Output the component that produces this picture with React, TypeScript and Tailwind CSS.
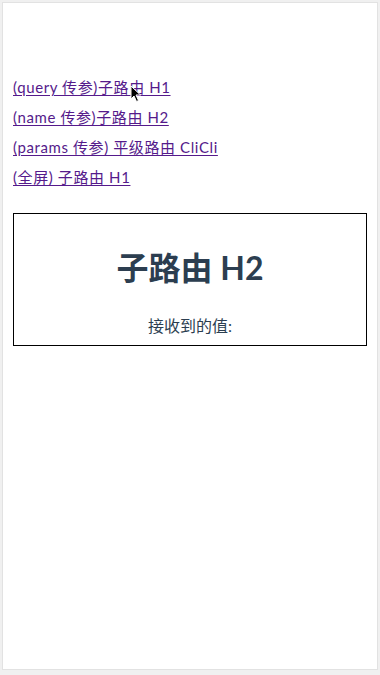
const links = [
  "(query 传参)子路由 H1",
  "(name 传参)子路由 H2",
  "(params 传参) 平级路由 CliCli",
  "(全屏) 子路由 H1",
];

function Cursor() {
  return (
    <svg className="absolute left-[127px] top-[82px]" width="12" height="18" viewBox="0 0 12 18">
      <path d="M1 1 L1 14 L4 11 L6.5 16.5 L8.5 15.5 L6 10 L10.5 10 Z" fill="#000" stroke="#fff" strokeWidth="1" />
    </svg>
  );
}

export default function App() {
  return (
    <div className="w-[380px] h-[675px] bg-[#f0f0f0] pt-[2px] px-[2px] pb-[5px]">
      <div
        className="relative h-full bg-white border border-[#e2e2e2] pt-[69px] px-[10px]"
        style={{ fontFamily: 'Lato, "Noto Sans CJK SC", sans-serif' }}
      >
        <div className="flex flex-col">
          {links.map((l) => (
            <a
              key={l}
              href="#"
              className="h-[30px] leading-[30px] text-[15px] tracking-[0.6px] text-[#551a8b] underline underline-offset-2 w-fit"
            >
              {l}
            </a>
          ))}
        </div>
        <div className="mt-[21px] border border-black flex flex-col items-center pt-[35px] pb-[7px] text-[#2c3e50]">
          <h2 className="text-[32px] font-bold leading-[38px]">子路由 H2</h2>
          <p className="mt-[27px] text-[16px] leading-[24px]">接收到的值:</p>
        </div>
        <Cursor />
      </div>
    </div>
  );
}
